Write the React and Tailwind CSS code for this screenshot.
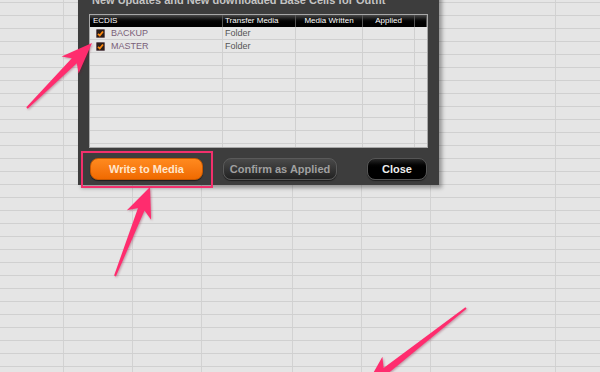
import React from 'react';

const sheetCols = [64, 69, 69, 91, 69, 69, 125, 60];
const sheetRows = Array.from({ length: 30 });

const tableCols = [
  { label: 'ECDIS', w: 'w-[133px]', align: 'text-left pl-[3px]' },
  { label: 'Transfer Media', w: 'w-[73px]', align: 'text-left pl-[2px]' },
  { label: 'Media Written', w: 'w-[67px]', align: 'text-center' },
  { label: 'Applied', w: 'w-[52px]', align: 'text-center' },
  { label: '', w: 'flex-1', align: '' },
];

const items = [
  { name: 'BACKUP', media: 'Folder' },
  { name: 'MASTER', media: 'Folder' },
];

// tapered annotation arrow: tail (tx,ty) -> tip (px,py)
function arrowPoints(tx, ty, px, py, headLen, headW, w0, w1) {
  const dx = px - tx;
  const dy = py - ty;
  const len = Math.hypot(dx, dy);
  const ux = dx / len;
  const uy = dy / len;
  const nx = -uy;
  const ny = ux;
  const bx = px - ux * headLen;
  const by = py - uy * headLen;
  const sweep = 4;
  const pts = [
    [tx + (nx * w0) / 2, ty + (ny * w0) / 2],
    [bx + (nx * w1) / 2 + ux * 2, by + (ny * w1) / 2 + uy * 2],
    [bx + nx * headW - ux * sweep, by + ny * headW - uy * sweep],
    [px, py],
    [bx - nx * headW - ux * sweep, by - ny * headW - uy * sweep],
    [bx - (nx * w1) / 2 + ux * 2, by - (ny * w1) / 2 + uy * 2],
    [tx - (nx * w0) / 2, ty - (ny * w0) / 2],
  ];
  return pts.map((p) => p[0].toFixed(1) + ',' + p[1].toFixed(1)).join(' ');
}

function CheckBox() {
  return (
    <span className="w-[9px] h-[9px] bg-[#2a1e1a] border border-[#6b5a60] rounded-[1px] flex items-center justify-center">
      <svg width="7" height="7" viewBox="0 0 7 7">
        <path d="M1 3.8 L2.8 5.5 L6 1.5" stroke="#ff8a10" strokeWidth="1.8" fill="none" />
      </svg>
    </span>
  );
}

export default function App() {
  return (
    <div
      className="relative w-[600px] h-[372px] overflow-hidden bg-[#e5e5e5]"
      style={{ fontFamily: '"Liberation Sans", Arial, sans-serif' }}
    >
      {/* spreadsheet behind the dialog */}
      <div className="mt-[-10px] flex flex-col">
        {sheetRows.map((_, r) => (
          <div key={r} className="flex h-[13px] border-b border-[#d0d0d0]">
            {sheetCols.map((w, c) => (
              <div
                key={c}
                className="h-full border-r border-[#d2d2d2] shrink-0"
                style={{ width: w }}
              />
            ))}
          </div>
        ))}
      </div>

      {/* dialog */}
      <div className="absolute left-[78px] top-[-20px] w-[361px] h-[205px] bg-[#3d3d3d] flex flex-col shadow-[3px_3px_4px_rgba(0,0,0,0.35)]">
        <div className="h-[34px] pt-[14px] pl-[14px] text-[11px] leading-[13px] text-[#c4c4c4] font-semibold whitespace-nowrap">
          New Updates and New downloaded Base Cells for Outfit
        </div>
        <div className="mx-[11px] h-[134px] border border-[#a8a8a8] bg-[#e6e6e6] flex flex-col overflow-hidden">
          <div className="flex h-[12px] bg-gradient-to-b from-[#4a4a4a] via-[#050505] to-black">
            {tableCols.map((col, i) => (
              <div
                key={i}
                className={`${col.w} ${col.align} shrink-0 border-r border-[#555] text-[8px] leading-[12px] text-white whitespace-nowrap overflow-hidden`}
              >
                {col.label}
              </div>
            ))}
          </div>
          {Array.from({ length: 10 }).map((_, r) => {
            const item = items[r];
            return (
              <div key={r} className="flex h-[13px] shrink-0 border-b border-[#d0d0d0]">
                <div className="w-[133px] shrink-0 border-r border-[#d0d0d0] flex items-center pl-[6px] gap-[6px]">
                  {item && <CheckBox />}
                  {item && (
                    <span className="text-[9px] leading-[13px] text-[#7a6078]">{item.name}</span>
                  )}
                </div>
                <div className="w-[73px] shrink-0 border-r border-[#d0d0d0] pl-[2px] text-[9px] leading-[13px] text-[#555]">
                  {item && item.media}
                </div>
                <div className="w-[67px] shrink-0 border-r border-[#d0d0d0]" />
                <div className="w-[52px] shrink-0 border-r border-[#d0d0d0]" />
                <div className="flex-1" />
              </div>
            );
          })}
        </div>
        <div className="flex items-start pt-[10px] pl-[12px]">
          <button className="w-[113px] h-[22px] rounded-[8px] bg-gradient-to-b from-[#ff8a1e] to-[#f06a00] border border-[#c85800] text-[11px] font-bold text-[#ffe6cc] shadow-[0_1px_1px_rgba(0,0,0,0.5)]">
            Write to Media
          </button>
          <button className="ml-[20px] w-[114px] h-[22px] rounded-[8px] bg-gradient-to-b from-[#4a4a4a] to-[#222] border border-[#5a5a5a] text-[11px] font-bold text-[#a0a0a0] shadow-[0_1px_1px_rgba(0,0,0,0.5)]">
            Confirm as Applied
          </button>
          <button className="ml-[30px] w-[60px] h-[22px] rounded-[8px] bg-gradient-to-b from-[#2a2a2a] via-black to-black border border-[#555] text-[11px] font-bold text-[#eeeeee] shadow-[0_1px_1px_rgba(0,0,0,0.5)]">
            Close
          </button>
        </div>
      </div>

      {/* highlight box */}
      <div className="absolute left-[81px] top-[151px] w-[132px] h-[37px] border-2 border-[#f2306c]" />

      {/* annotation arrows */}
      <svg className="absolute left-0 top-0" width="600" height="372" viewBox="0 0 600 372">
        <g fill="#ff2c6e" style={{ filter: 'drop-shadow(1px 1px 1px rgba(120,0,40,0.35))' }}>
          <polygon points={arrowPoints(27, 108, 92, 43, 27, 12, 2, 7)} />
          <polygon points={arrowPoints(115, 276, 150, 187, 26, 13, 2, 7)} />
          <polygon points={arrowPoints(466, 308, 366, 386, 27, 13, 2, 7)} />
        </g>
      </svg>
    </div>
  );
}
